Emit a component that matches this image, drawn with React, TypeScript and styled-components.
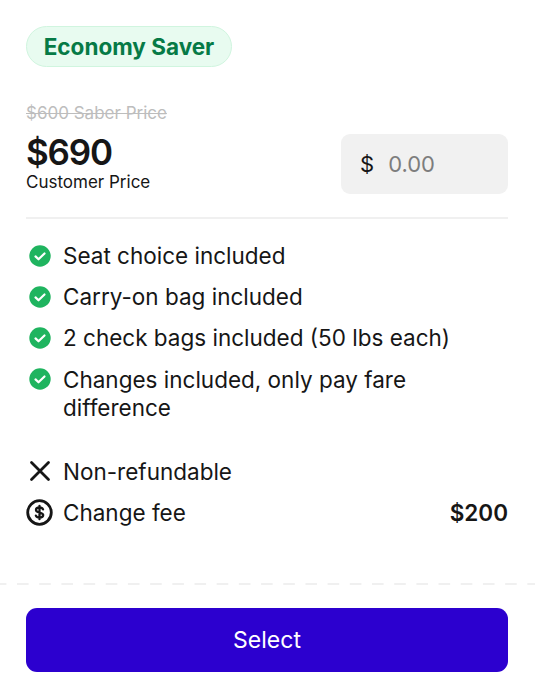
import styled, { createGlobalStyle } from "styled-components";

const GlobalStyle = createGlobalStyle`
  html, body { margin: 0; padding: 0; background: #fff; }
  * { box-sizing: border-box; }
  body { font-family: Inter, "Noto Sans", sans-serif; color: #161616; }
`;

const Card = styled.div`
  width: 535px;
  height: 698px;
  padding-top: 26px;
  display: flex;
  flex-direction: column;
`;

const Body = styled.div`
  padding: 0 27px 0 26px;
  display: flex;
  flex-direction: column;
  align-items: flex-start;
`;

const Badge = styled.div`
  height: 41px;
  width: 206px;
  border-radius: 21px;
  background: #e8fbf0;
  border: 1px solid #d0f5df;
  color: #067a46;
  font-size: 22.5px;
  font-weight: 700;
  display: flex;
  align-items: center;
  justify-content: center;
`;

const PriceRow = styled.div`
  width: 100%;
  margin-top: 35px;
  padding-bottom: 25px;
  border-bottom: 2px solid #f0f0f0;
  display: flex;
  justify-content: space-between;
  align-items: flex-end;
`;

const PriceBlock = styled.div`
  display: flex;
  flex-direction: column;
`;

const OldPrice = styled.s`
  font-size: 17px;
  line-height: 22px;
  color: #bdbdbd;
`;

const Price = styled.div`
  font-size: 35px;
  line-height: 40px;
  font-weight: 600;
  margin-top: 8px;
  letter-spacing: -1.2px;
`;

const PriceLabel = styled.div`
  font-size: 17px;
  line-height: 20px;
`;

const AmountField = styled.div`
  width: 167px;
  height: 60px;
  border-radius: 9px;
  background: #f1f1f1;
  display: flex;
  align-items: center;
  padding-left: 19px;
  gap: 14px;
  margin-bottom: -2px;
  font-size: 22px;
`;

const Placeholder = styled.span`
  color: #7d7d7d;
`;

const Features = styled.ul`
  list-style: none;
  margin: 23px 0 0;
  padding: 0;
  width: 100%;
  display: flex;
  flex-direction: column;
  gap: 13.2px;
`;

const Feature = styled.li`
  display: flex;
  gap: 10px;
  font-size: 22.5px;
  line-height: 28px;
`;

const IconSlot = styled.span`
  width: 27px;
  height: 27px;
  flex: none;
  display: flex;
  align-items: center;
  justify-content: center;
`;

const Terms = styled(Features)`
  margin-top: 36px;
`;

const Fee = styled.strong`
  margin-left: auto;
  font-weight: 600;
`;

const DashedRule = styled.div`
  height: 2px;
  margin-top: 56px;
  background-image: linear-gradient(to right, #f0f0f0 50%, transparent 50%);
  background-size: 22.2px 2px;
  background-position: -5.2px 0;
`;

const Footer = styled.div`
  padding: 23px 27px 0 26px;
`;

const SelectButton = styled.button`
  width: 100%;
  height: 64px;
  border: none;
  border-radius: 11px;
  background: #2c00cf;
  color: #fff;
  font: 400 23px Inter, sans-serif;
`;

const CheckIcon = () => (
  <svg width="22" height="22" viewBox="0 0 22 22">
    <circle cx="11" cy="11" r="10.7" fill="#1fb45f" />
    <path d="M6.5 11.4l3 2.9 6-5.8" fill="none" stroke="#fff" strokeWidth="2.2" strokeLinecap="round" strokeLinejoin="round" />
  </svg>
);

const CrossIcon = () => (
  <svg width="22" height="22" viewBox="0 0 22 22">
    <path d="M2.500 2.500l17 17M19.500 2.500l-17 17" fill="none" stroke="#161616" strokeWidth="2.800" strokeLinecap="round" />
  </svg>
);

const DollarIcon = () => (
  <svg width="27" height="27" viewBox="0 0 27 27" fill="none" stroke="#161616" strokeLinecap="round" strokeLinejoin="round">
    <circle cx="13.500" cy="13.500" r="11.800" strokeWidth="2.800" />
    <path d="M17 10.400c-.5-1.200-1.800-1.900-3.500-1.900-2 0-3.500 1-3.500 2.500 0 3.400 7.200 1.700 7.200 5.100 0 1.500-1.600 2.500-3.700 2.500-1.800 0-3.100-.8-3.600-2M13.500 6.800v13.400" strokeWidth="2.300" />
  </svg>
);

const included = [
  "Seat choice included",
  "Carry-on bag included",
  "2 check bags included (50 lbs each)",
  "Changes included, only pay fare difference",
];

export default function App() {
  return (
    <>
      <GlobalStyle />
      <Card>
        <Body>
          <Badge>Economy Saver</Badge>
          <PriceRow>
            <PriceBlock>
              <OldPrice>$600 Saber Price</OldPrice>
              <Price>$690</Price>
              <PriceLabel>Customer Price</PriceLabel>
            </PriceBlock>
            <AmountField>
              <span>$</span>
              <Placeholder>0.00</Placeholder>
            </AmountField>
          </PriceRow>
          <Features>
            {included.map((text) => (
              <Feature key={text}>
                <IconSlot>
                  <CheckIcon />
                </IconSlot>
                <span>{text}</span>
              </Feature>
            ))}
          </Features>
          <Terms>
            <Feature>
              <IconSlot>
                <CrossIcon />
              </IconSlot>
              <span>Non-refundable</span>
            </Feature>
            <Feature>
              <IconSlot>
                <DollarIcon />
              </IconSlot>
              <span>Change fee</span>
              <Fee>$200</Fee>
            </Feature>
          </Terms>
        </Body>
        <DashedRule />
        <Footer>
          <SelectButton>Select</SelectButton>
        </Footer>
      </Card>
    </>
  );
}
